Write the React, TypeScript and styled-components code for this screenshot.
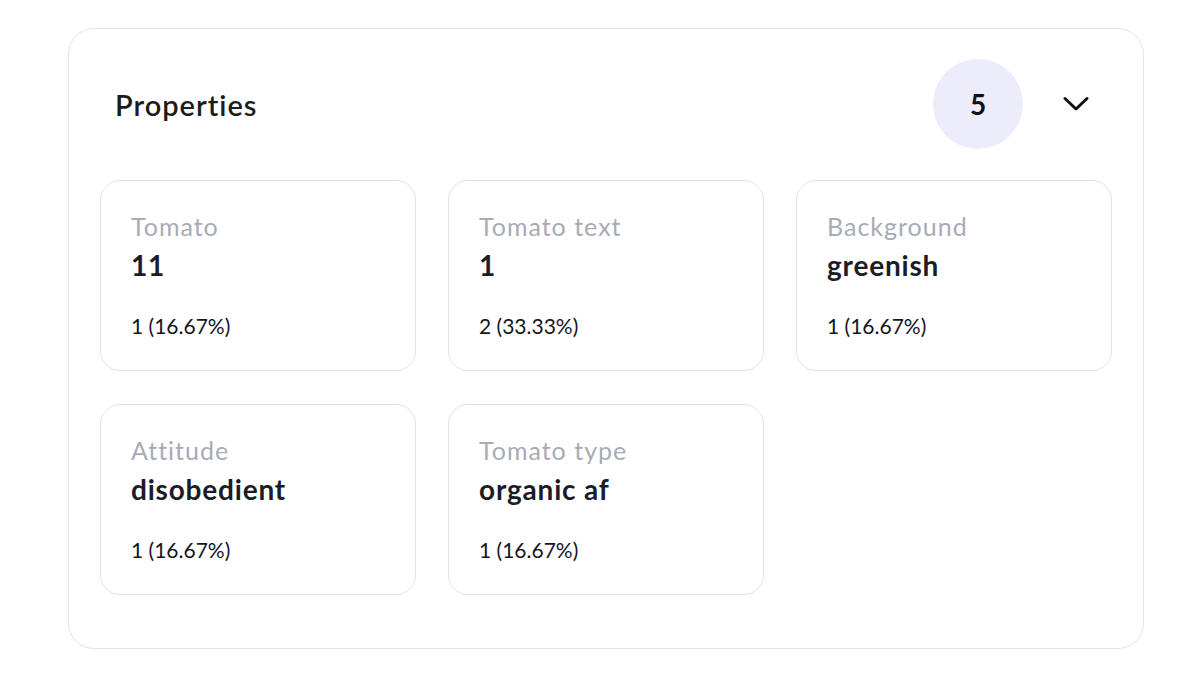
import React from "react";
import styled, { createGlobalStyle } from "styled-components";

const GlobalStyle = createGlobalStyle`
  body {
    margin: 0;
    background: #ffffff;
    font-family: "Lato", "Noto Sans", sans-serif;
    -webkit-font-smoothing: antialiased;
  }
`;

const Page = styled.div`
  padding: 28px 56px 0 68px;
`;

const Panel = styled.section`
  width: 1076px;
  box-sizing: border-box;
  border: 1.5px solid #e3e3ea;
  border-radius: 26px;
  padding: 30px 31px 53px;
`;

const Header = styled.div`
  display: flex;
  align-items: center;
  height: 90px;
  padding: 0 23px 0 15px;
  margin-bottom: 31px;
`;

const Title = styled.h2`
  flex: 1;
  margin: 0;
  font-size: 29px;
  font-weight: 600;
  color: #1c1c20;
  letter-spacing: 1px;
`;

const CountBadge = styled.div`
  width: 90px;
  height: 90px;
  border-radius: 50%;
  background: #ececfb;
  display: flex;
  align-items: center;
  justify-content: center;
  font-size: 28px;
  font-weight: 700;
  color: #111114;
  margin-right: 40px;
`;

const Toggle = styled.button`
  border: none;
  background: none;
  padding: 0;
  width: 26px;
  height: 26px;
  display: flex;
  align-items: center;
  justify-content: center;
  cursor: pointer;
`;

const Grid = styled.div`
  display: grid;
  grid-template-columns: repeat(3, 316px);
  column-gap: 32px;
  row-gap: 33px;
`;

const Card = styled.div`
  height: 191px;
  box-sizing: border-box;
  border: 1.5px solid #e1e1e9;
  border-radius: 20px;
  padding: 30px 30px;
  display: flex;
  flex-direction: column;
`;

const Label = styled.span`
  font-size: 25px;
  line-height: 30px;
  color: #a8abb7;
  letter-spacing: 1px;
`;

const Value = styled.span`
  font-size: 28px;
  line-height: 34px;
  font-weight: 700;
  color: #1a1c28;
  margin-top: 7px;
  letter-spacing: 0.8px;
`;

const Count = styled.span`
  font-size: 21px;
  line-height: 28px;
  color: #15161c;
  margin-top: 30px;
`;

type Property = { name: string; value: string; count: string };

const properties: Property[] = [
  { name: "Tomato", value: "11", count: "1 (16.67%)" },
  { name: "Tomato text", value: "1", count: "2 (33.33%)" },
  { name: "Background", value: "greenish", count: "1 (16.67%)" },
  { name: "Attitude", value: "disobedient", count: "1 (16.67%)" },
  { name: "Tomato type", value: "organic af", count: "1 (16.67%)" },
];

const ChevronDown = () => (
  <svg width="26" height="16" viewBox="0 0 26 16" fill="none">
    <path
      d="M2 2.5L13 13L24 2.5"
      stroke="#111114"
      strokeWidth="3"
      strokeLinecap="round"
      strokeLinejoin="round"
    />
  </svg>
);

export default function App() {
  return (
    <Page>
      <GlobalStyle />
      <Panel>
        <Header>
          <Title>Properties</Title>
          <CountBadge>{properties.length}</CountBadge>
          <Toggle aria-label="Collapse">
            <ChevronDown />
          </Toggle>
        </Header>
        <Grid>
          {properties.map((p) => (
            <Card key={p.name}>
              <Label>{p.name}</Label>
              <Value>{p.value}</Value>
              <Count>{p.count}</Count>
            </Card>
          ))}
        </Grid>
      </Panel>
    </Page>
  );
}
